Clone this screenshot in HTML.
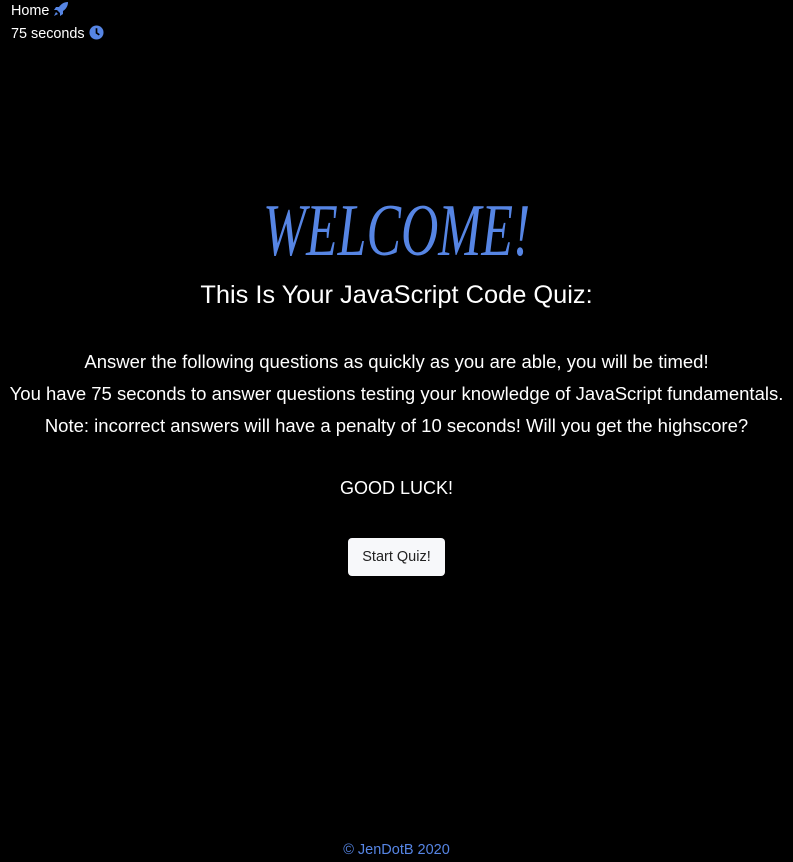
<!DOCTYPE html>
<html><head><style>
body{margin:0;background:#000;width:793px;height:862px;position:relative;font-family:"Liberation Sans",sans-serif;color:#fff;overflow:hidden}
.nav{position:absolute;left:11px;font-size:14.4px;}
.c{position:absolute;left:0;width:793px;text-align:center;white-space:nowrap}
.w{position:absolute;top:186px;left:263px;width:267px;height:90px;color:#5685e4;font-family:"Liberation Serif",serif;font-style:italic;font-size:74px;line-height:90px;transform-origin:0 0;letter-spacing:0px}
p{margin:0}
</style></head><body>
<div class="nav" style="top:1px">Home <svg width="16" height="16" viewBox="0 0 16 16" style="vertical-align:-2px"><path d="M15 1C11 1 8 3 6 6L3 6 1 9 4 9 7 12 7 15 10 13 10 10C13 8 15 5 15 1Z" fill="#5685e4"/><path d="M3 11L1 15 5 13Z" fill="#5685e4"/></svg></div>
<div class="nav" style="top:25px">75 seconds <svg width="15" height="15" viewBox="0 0 16 16" style="vertical-align:-2px"><circle cx="8" cy="8" r="7.5" fill="#5685e4"/><path d="M8 3.5V8.5L11 10.5" stroke="#000" stroke-width="1.8" fill="none"/></svg></div>
<div class="w" id="w">WELCOME!</div>
<div class="c" style="top:281px;font-size:25.4px">This Is Your JavaScript Code Quiz:</div>
<div class="c" style="top:346px;font-size:18.5px;line-height:32px"><p>Answer the following questions as quickly as you are able, you will be timed!</p><p>You have 75 seconds to answer questions testing your knowledge of JavaScript fundamentals.</p><p>Note: incorrect answers will have a penalty of 10 seconds! Will you get the highscore?</p></div>
<div class="c" style="top:478px;font-size:18px">GOOD LUCK!</div>
<div style="position:absolute;left:348px;top:538px;width:97px;height:38px;background:#f7f8fa;border-radius:4px;color:#222;font-size:14.5px;line-height:38px;text-align:center">Start Quiz!</div>
<div class="c" style="top:842px;font-size:14.5px;color:#5685e4">© JenDotB 2020</div>
<script>
var w=document.getElementById('w');w.style.width='auto';w.style.whiteSpace='nowrap';var r=w.scrollWidth;w.style.transform='scaleX('+(267/r)+')';
</script>
</body></html>
